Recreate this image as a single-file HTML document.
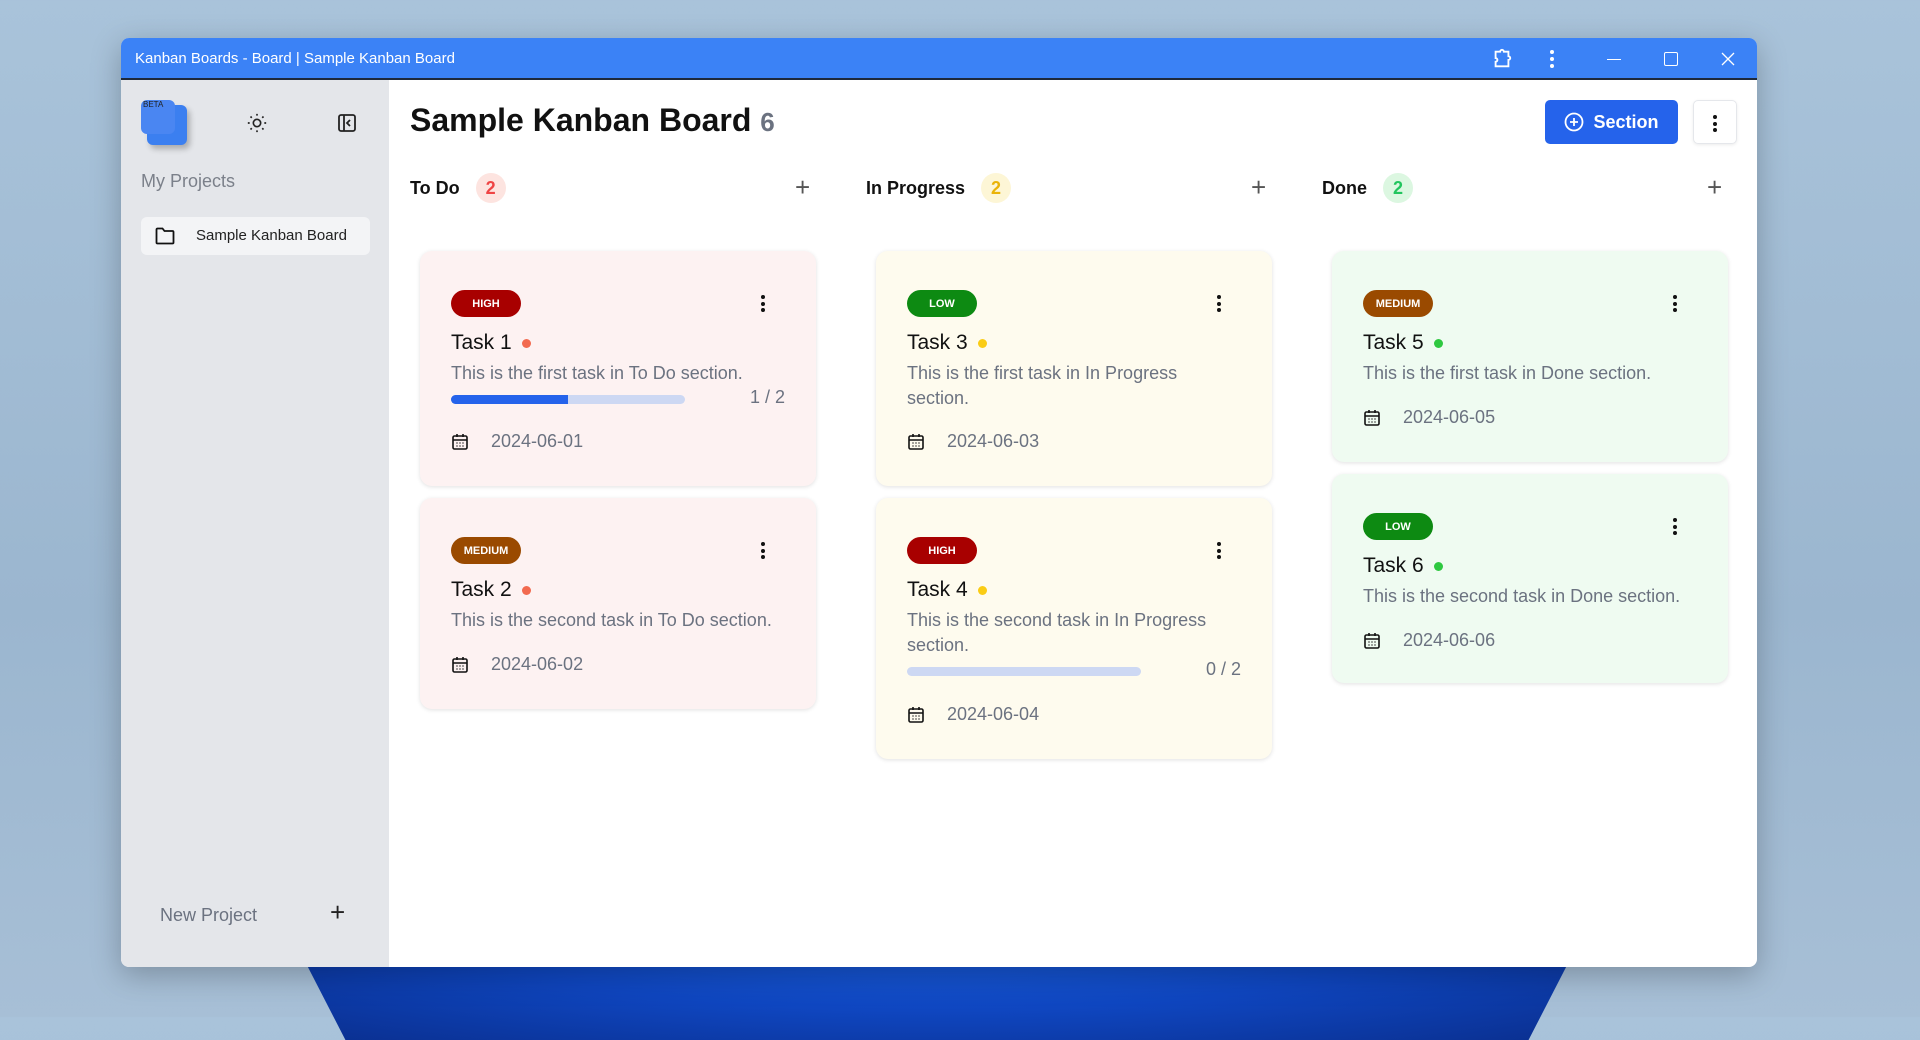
<!DOCTYPE html>
<html><head><meta charset="utf-8"><style>
*{box-sizing:border-box;margin:0;padding:0}
body{width:1920px;height:1017px;overflow:hidden;position:relative;font-family:"Liberation Sans",sans-serif;background:linear-gradient(180deg,#a9c3da 0%,#9bb6cf 60%,#a7bfd6 100%)}
.bloom{position:absolute;left:294px;top:940px;width:1286px;height:100px;background:radial-gradient(ellipse at 50% 0%,#1a5fe0 0%,#0f46c0 50%,#0a2f8f 100%);clip-path:polygon(0 0,100% 0,96% 100%,4% 100%)}
.win{position:absolute;left:121px;top:38px;width:1636px;height:929px;background:#fff;border-radius:8px;overflow:hidden;box-shadow:0 8px 30px rgba(0,0,0,.25)}
.tb{height:42px;background:#3b82f6;border-bottom:2px solid #1e293b;color:#fff;font-size:15px;display:flex;align-items:center;padding-left:14px;position:relative}
.side{position:absolute;left:0;top:42px;width:268px;bottom:0;background:#e4e6ea}
.main{position:absolute;left:268px;top:42px;right:0;bottom:0}
.abs{position:absolute}
.card{position:absolute;width:396px;border-radius:12px;box-shadow:0 1px 4px rgba(0,0,0,.12)}
.pink{background:#fdf2f2}.yel{background:#fefbee}.grn{background:#effbf1}
.badge{position:absolute;left:31px;top:39px;height:27px;border-radius:14px;color:#fff;font-size:11px;font-weight:bold;display:flex;align-items:center;justify-content:center}
.high{background:#a80000;width:70px}.med{background:#9a4a00;width:70px}.low{background:#0d8a12;width:70px}
.keb{position:absolute;left:341px;top:44px;width:4px}
.keb i{display:block;width:4px;height:4px;border-radius:2px;background:#111;margin-bottom:2.5px}
.ttl{position:absolute;left:31px;top:80px;font-size:21px;color:#111;display:flex;align-items:center}
.ttl b{display:inline-block;width:9px;height:9px;border-radius:5px;margin-left:10px}
.desc{position:absolute;left:31px;top:110px;font-size:18px;color:#6b7280;line-height:25px;width:300px}
.date{position:absolute;left:31px;font-size:18px;color:#6b7280;display:flex;align-items:center}
.date svg{margin-right:22px}
.bar{position:absolute;left:31px;width:234px;height:9px;border-radius:5px;background:#cdd8f3;overflow:hidden}
.frac{position:absolute;right:31px;font-size:18px;color:#6b7280}
.colh{position:absolute;top:93px;font-size:18px;font-weight:bold;color:#111;display:flex;align-items:center}
.cnt{width:30px;height:30px;border-radius:15px;display:inline-flex;align-items:center;justify-content:center;margin-left:16px;font-size:18px}
.plus{position:absolute;top:92px;font-size:26px;color:#555;font-weight:300}
</style></head><body>
<div class="bloom"></div>
<div class="win">
 <div class="tb">Kanban Boards - Board | Sample Kanban Board
  <svg class="abs" style="left:1370px;top:10px" width="22" height="22" viewBox="0 0 24 24" fill="none" stroke="#fff" stroke-width="2"><path d="M5 4h5a2 2 0 0 1 4 0h5v5a2 2 0 0 1 0 4v7H5v-5a2 2 0 0 0 0-4z"/></svg>
  <div class="abs" style="left:1429px;top:12px"><i style="display:block;width:4px;height:4px;border-radius:2px;background:#fff;margin-bottom:3px"></i><i style="display:block;width:4px;height:4px;border-radius:2px;background:#fff;margin-bottom:3px"></i><i style="display:block;width:4px;height:4px;border-radius:2px;background:#fff"></i></div>
  <div class="abs" style="left:1486px;top:21px;width:14px;height:1px;background:#fff"></div>
  <div class="abs" style="left:1543px;top:14px;width:14px;height:14px;border:1.5px solid #fff;border-radius:2px"></div>
  <svg class="abs" style="left:1600px;top:14px" width="14" height="14" viewBox="0 0 14 14" stroke="#fff" stroke-width="1.3"><path d="M1 1l12 12M13 1L1 13"/></svg>
 </div>
 <div class="side">
  <div class="abs" style="left:26px;top:25px;width:40px;height:40px;border-radius:6px;background:#3b7ff0;box-shadow:3px 4px 6px rgba(0,0,0,.25)"></div>
  <div class="abs" style="left:20px;top:20px;width:34px;height:34px;border-radius:6px;background:#4a86f2"></div>
  <div class="abs" style="left:22px;top:20px;font-size:8px;color:#222">BETA</div>
  <svg class="abs" style="left:125px;top:32px" width="22" height="22" viewBox="0 0 24 24" fill="none" stroke="#222" stroke-width="1.8"><circle cx="12" cy="12" r="4"/><path d="M12 2v2M12 20v2M2 12h2M20 12h2M4.9 4.9l1.4 1.4M17.7 17.7l1.4 1.4M4.9 19.1l1.4-1.4M17.7 6.3l1.4-1.4"/></svg>
  <svg class="abs" style="left:216px;top:33px" width="20" height="20" viewBox="0 0 20 20" fill="none" stroke="#222" stroke-width="1.8"><rect x="2" y="2" width="16" height="16" rx="2"/><path d="M7 2v16M13 7l-3 3 3 3"/></svg>
  <div class="abs" style="left:20px;top:91px;font-size:18px;color:#7b808a">My Projects</div>
  <div class="abs" style="left:20px;top:137px;width:229px;height:38px;background:#f3f4f6;border-radius:6px"></div>
  <svg class="abs" style="left:34px;top:147px" width="20" height="18" viewBox="0 0 20 18" fill="none" stroke="#111" stroke-width="1.8"><path d="M1.5 2.5a1 1 0 0 1 1-1h5l2 2.5h8a1 1 0 0 1 1 1V15.5a1 1 0 0 1-1 1h-15a1 1 0 0 1-1-1z"/></svg>
  <div class="abs" style="left:75px;top:147px;font-size:15px;color:#222">Sample Kanban Board</div>
  <div class="abs" style="left:39px;top:825px;font-size:18px;color:#6b7280">New Project</div>
  <div class="abs" style="left:209px;top:817px;font-size:26px;color:#222">+</div>
 </div>
 <div class="main">
  <div class="abs" style="left:21px;top:22px;font-size:32px;font-weight:bold;color:#111">Sample Kanban Board <span style="color:#6b7280;font-weight:bold;font-size:26px">6</span></div>
  <div class="abs" style="left:1156px;top:20px;width:133px;height:44px;background:#2563eb;border-radius:5px;color:#fff;font-size:18px;font-weight:bold;display:flex;align-items:center;justify-content:center"><svg width="20" height="20" viewBox="0 0 20 20" fill="none" stroke="#fff" stroke-width="1.8" style="margin-right:9px"><circle cx="10" cy="10" r="8.5"/><path d="M10 6v8M6 10h8"/></svg>Section</div>
  <div class="abs" style="left:1304px;top:20px;width:44px;height:44px;border:1px solid #e5e7eb;border-radius:5px;box-shadow:0 1px 3px rgba(0,0,0,.08)"><div style="position:absolute;left:19px;top:14px"><i style="display:block;width:4px;height:4px;border-radius:2px;background:#111;margin-bottom:2.5px"></i><i style="display:block;width:4px;height:4px;border-radius:2px;background:#111;margin-bottom:2.5px"></i><i style="display:block;width:4px;height:4px;border-radius:2px;background:#111"></i></div></div>

  <div class="colh" style="left:21px">To Do<span class="cnt" style="background:#fde4e0;color:#ef4444">2</span></div>
  <div class="plus" style="left:406px">+</div>
  <div class="colh" style="left:477px">In Progress<span class="cnt" style="background:#fdf6d6;color:#eab308">2</span></div>
  <div class="plus" style="left:862px">+</div>
  <div class="colh" style="left:933px">Done<span class="cnt" style="background:#dcf7e1;color:#22c55e">2</span></div>
  <div class="plus" style="left:1318px">+</div>
 </div>
</div>

<div class="card pink" style="left:420px;top:251px;height:235px">
 <div class="badge high">HIGH</div><div class="keb"><i></i><i></i><i></i></div>
 <div class="ttl">Task 1<b style="background:#f26a4f"></b></div>
 <div class="desc" style="width:340px">This is the first task in To Do section.</div>
 <div class="bar" style="top:144px"><div style="width:50%;height:100%;background:#2563eb"></div></div>
 <div class="frac" style="top:136px">1 / 2</div>
 <div class="date" style="top:180px"><svg width="18" height="18" viewBox="0 0 18 18" fill="none" stroke="#111" stroke-width="1.6"><rect x="2" y="3" width="14" height="13" rx="1.5"/><path d="M2 7h14M6 1v3M12 1v3"/><path d="M5.5 10h1M8.5 10h1M11.5 10h1M5.5 13h1M8.5 13h1M11.5 13h1" stroke-width="1.4"/></svg>2024-06-01</div>
</div>
<div class="card pink" style="left:420px;top:498px;height:211px">
 <div class="badge med">MEDIUM</div><div class="keb"><i></i><i></i><i></i></div>
 <div class="ttl">Task 2<b style="background:#f26a4f"></b></div>
 <div class="desc" style="width:340px">This is the second task in To Do section.</div>
 <div class="date" style="top:156px"><svg width="18" height="18" viewBox="0 0 18 18" fill="none" stroke="#111" stroke-width="1.6"><rect x="2" y="3" width="14" height="13" rx="1.5"/><path d="M2 7h14M6 1v3M12 1v3"/><path d="M5.5 10h1M8.5 10h1M11.5 10h1M5.5 13h1M8.5 13h1M11.5 13h1" stroke-width="1.4"/></svg>2024-06-02</div>
</div>
<div class="card yel" style="left:876px;top:251px;height:235px">
 <div class="badge low">LOW</div><div class="keb"><i></i><i></i><i></i></div>
 <div class="ttl">Task 3<b style="background:#facc15"></b></div>
 <div class="desc">This is the first task in In Progress section.</div>
 <div class="date" style="top:180px"><svg width="18" height="18" viewBox="0 0 18 18" fill="none" stroke="#111" stroke-width="1.6"><rect x="2" y="3" width="14" height="13" rx="1.5"/><path d="M2 7h14M6 1v3M12 1v3"/><path d="M5.5 10h1M8.5 10h1M11.5 10h1M5.5 13h1M8.5 13h1M11.5 13h1" stroke-width="1.4"/></svg>2024-06-03</div>
</div>
<div class="card yel" style="left:876px;top:498px;height:261px">
 <div class="badge high">HIGH</div><div class="keb"><i></i><i></i><i></i></div>
 <div class="ttl">Task 4<b style="background:#facc15"></b></div>
 <div class="desc">This is the second task in In Progress section.</div>
 <div class="bar" style="top:169px"></div>
 <div class="frac" style="top:161px">0 / 2</div>
 <div class="date" style="top:206px"><svg width="18" height="18" viewBox="0 0 18 18" fill="none" stroke="#111" stroke-width="1.6"><rect x="2" y="3" width="14" height="13" rx="1.5"/><path d="M2 7h14M6 1v3M12 1v3"/><path d="M5.5 10h1M8.5 10h1M11.5 10h1M5.5 13h1M8.5 13h1M11.5 13h1" stroke-width="1.4"/></svg>2024-06-04</div>
</div>
<div class="card grn" style="left:1332px;top:251px;height:211px">
 <div class="badge med">MEDIUM</div><div class="keb"><i></i><i></i><i></i></div>
 <div class="ttl">Task 5<b style="background:#2ec840"></b></div>
 <div class="desc" style="width:340px">This is the first task in Done section.</div>
 <div class="date" style="top:156px"><svg width="18" height="18" viewBox="0 0 18 18" fill="none" stroke="#111" stroke-width="1.6"><rect x="2" y="3" width="14" height="13" rx="1.5"/><path d="M2 7h14M6 1v3M12 1v3"/><path d="M5.5 10h1M8.5 10h1M11.5 10h1M5.5 13h1M8.5 13h1M11.5 13h1" stroke-width="1.4"/></svg>2024-06-05</div>
</div>
<div class="card grn" style="left:1332px;top:474px;height:209px">
 <div class="badge low">LOW</div><div class="keb"><i></i><i></i><i></i></div>
 <div class="ttl">Task 6<b style="background:#2ec840"></b></div>
 <div class="desc" style="width:340px">This is the second task in Done section.</div>
 <div class="date" style="top:156px"><svg width="18" height="18" viewBox="0 0 18 18" fill="none" stroke="#111" stroke-width="1.6"><rect x="2" y="3" width="14" height="13" rx="1.5"/><path d="M2 7h14M6 1v3M12 1v3"/><path d="M5.5 10h1M8.5 10h1M11.5 10h1M5.5 13h1M8.5 13h1M11.5 13h1" stroke-width="1.4"/></svg>2024-06-06</div>
</div>
</body></html>
